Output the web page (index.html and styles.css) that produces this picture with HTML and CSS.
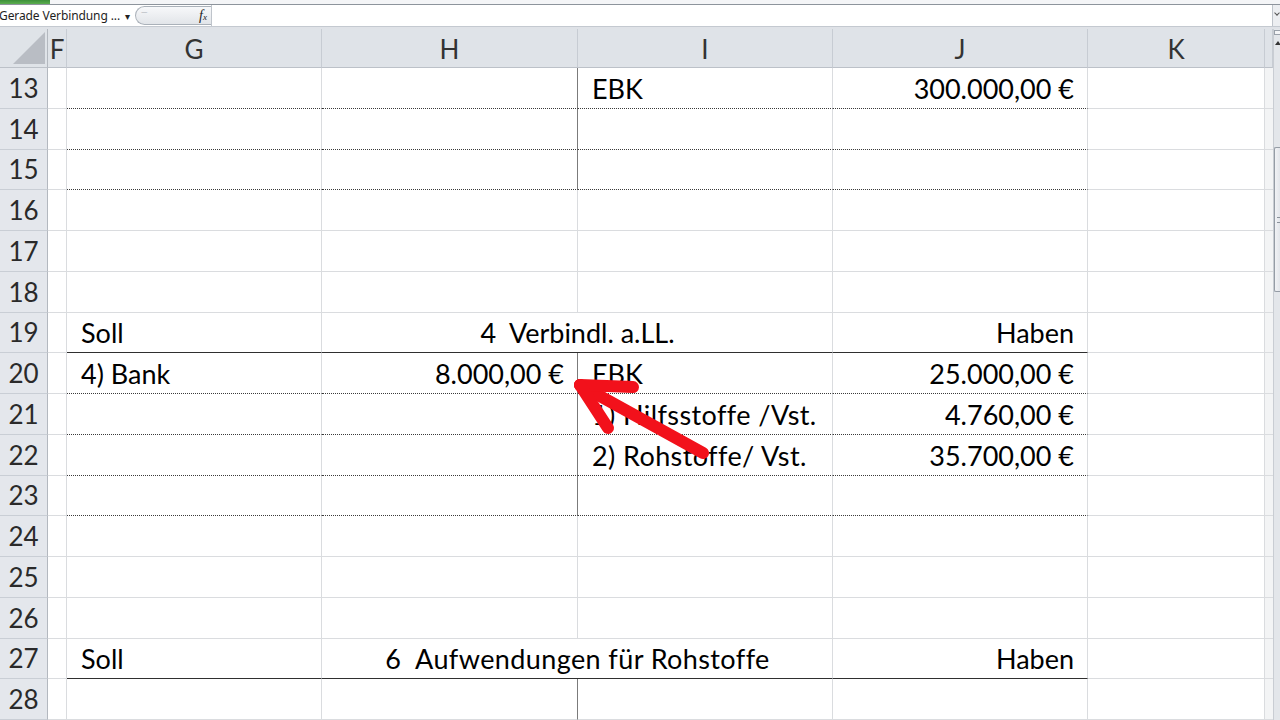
FILE: index.html
```html
<!DOCTYPE html>
<html>
	<head>
		<title>Mappe1 - Excel</title>
		<link rel="stylesheet" href="styles.css">
	</head>
	<body>
		<div class="page">
			<div class="topstrip"><div class="filetab"></div></div>
			<div class="fbar">
				<div class="namebox">Gerade Verbindung ...<span class="drop">&#9662;</span></div>
				<div class="fxbox"><span class="dim">&#8722;</span><span class="fx">f<sub>x</sub></span></div>
				<div class="finput"></div>
				<div class="fexpand"><span class="chev"></span></div>
			</div>
			<div class="band"></div>
			<div class="main">
				<div class="sheet">
					<!-- header -->
					<div class="hd corner"><svg width="34" height="34" viewBox="0 0 34 34"><polygon points="32,1 32,33 0,33" fill="#b9bdc4"/></svg></div>
					<div class="hd">F</div>
					<div class="hd">G</div>
					<div class="hd">H</div>
					<div class="hd">I</div>
					<div class="hd">J</div>
					<div class="hd">K</div>
					<div class="hd"></div>

					<div class="rh">13</div><div class="c f"></div><div class="c dot"></div><div class="c dot mid"></div><div class="c dot">EBK</div><div class="c dot r">300.000,00 €</div><div class="c"></div><div class="c end"></div>
					<div class="rh">14</div><div class="c f"></div><div class="c dot"></div><div class="c dot mid"></div><div class="c dot"></div><div class="c dot"></div><div class="c"></div><div class="c end"></div>
					<div class="rh">15</div><div class="c f"></div><div class="c dot"></div><div class="c dot mid"></div><div class="c dot"></div><div class="c dot"></div><div class="c"></div><div class="c end"></div>
					<div class="rh">16</div><div class="c f"></div><div class="c"></div><div class="c"></div><div class="c"></div><div class="c"></div><div class="c"></div><div class="c end"></div>
					<div class="rh">17</div><div class="c f"></div><div class="c"></div><div class="c"></div><div class="c"></div><div class="c"></div><div class="c"></div><div class="c end"></div>
					<div class="rh">18</div><div class="c f"></div><div class="c"></div><div class="c"></div><div class="c"></div><div class="c"></div><div class="c"></div><div class="c end"></div>
					<div class="rh">19</div><div class="c f"></div><div class="c line">Soll</div><div class="c line ctr span2">4&nbsp; Verbindl. a.LL.</div><div class="c line r">Haben</div><div class="c"></div><div class="c end"></div>
					<div class="rh">20</div><div class="c f"></div><div class="c dot">4) Bank</div><div class="c dot mid r">8.000,00 €</div><div class="c dot">EBK</div><div class="c dot r">25.000,00 €</div><div class="c"></div><div class="c end"></div>
					<div class="rh">21</div><div class="c f"></div><div class="c dot"></div><div class="c dot mid"></div><div class="c dot wide">1) Hilfsstoffe /Vst.</div><div class="c dot r">4.760,00 €</div><div class="c"></div><div class="c end"></div>
					<div class="rh">22</div><div class="c f"></div><div class="c dot"></div><div class="c dot mid"></div><div class="c dot wide">2) Rohstoffe/ Vst.</div><div class="c dot r">35.700,00 €</div><div class="c"></div><div class="c end"></div>
					<div class="rh">23</div><div class="c f"></div><div class="c dot"></div><div class="c dot mid"></div><div class="c dot"></div><div class="c dot"></div><div class="c"></div><div class="c end"></div>
					<div class="rh">24</div><div class="c f"></div><div class="c"></div><div class="c"></div><div class="c"></div><div class="c"></div><div class="c"></div><div class="c end"></div>
					<div class="rh">25</div><div class="c f"></div><div class="c"></div><div class="c"></div><div class="c"></div><div class="c"></div><div class="c"></div><div class="c end"></div>
					<div class="rh">26</div><div class="c f"></div><div class="c"></div><div class="c"></div><div class="c"></div><div class="c"></div><div class="c"></div><div class="c end"></div>
					<div class="rh">27</div><div class="c f"></div><div class="c line">Soll</div><div class="c line ctr span2 wide">6&nbsp; Aufwendungen für Rohstoffe</div><div class="c line r">Haben</div><div class="c"></div><div class="c end"></div>
					<div class="rh">28</div><div class="c f"></div><div class="c"></div><div class="c mid"></div><div class="c"></div><div class="c"></div><div class="c"></div><div class="c end"></div>
				</div>
				<div class="vscroll">
					<div class="split"></div>
					<div class="up"></div>
					<div class="thumb"><div class="grip"></div></div>
				</div>
			</div>
			<!-- red arrow drawn over the sheet -->
			<svg class="arrow" width="1280" height="720" viewBox="0 0 1280 720">
				<g stroke="#f2111b" stroke-width="12" stroke-linecap="round" stroke-linejoin="round" fill="none">
					<line x1="703" y1="453" x2="580" y2="385"/>
					<line x1="580" y1="385" x2="633" y2="387"/>
					<line x1="580" y1="385" x2="608" y2="428"/>
				</g>
			</svg>
		</div>
	</body>
</html>
```

FILE: styles.css
```css
body {
	margin: 0;
	background: #fff;
	font-family: Lato, "Open Sans", sans-serif;
	overflow: hidden;
}
.page {
	position: relative;
	width: 1280px;
	height: 720px;
	overflow: hidden;
}
.topstrip {
	height: 4px;
	background: #f4f5f7;
}
.filetab {
	width: 50px;
	height: 4px;
	background: linear-gradient(#3d8f3a, #5cae4f);
}
.fbar {
	display: flex;
	align-items: center;
	height: 21px;
	border-top: 1px solid #8d949c;
	border-bottom: 1px solid #c4c9d0;
	background: #fff;
	font-family: "Noto Sans", "DejaVu Sans", sans-serif;
	font-size: 12px;
}
.namebox {
	width: 133px;
	height: 100%;
	display: flex;
	align-items: center;
	margin-left: -1px;
	color: #1e1e1e;
	white-space: nowrap;
	letter-spacing: -0.1px;
}
.drop {
	font-size: 10px;
	margin-left: 5px;
	color: #222;
}
.fxbox {
	width: 76px;
	height: 19px;
	margin-left: 3px;
	box-sizing: border-box;
	border: 1px solid #aab1b9;
	border-right: none;
	border-radius: 10px 0 0 10px;
	background: linear-gradient(#f7f8fa, #e2e5e9);
	display: flex;
	align-items: center;
	justify-content: space-between;
	padding: 0 4px 0 5px;
}
.dim {
	color: #c4c8cd;
	font-size: 12px;
	line-height: 1;
	margin-top: -6px;
}
.fx {
	font-family: "Liberation Serif", serif;
	font-style: italic;
	font-size: 14px;
	color: #222;
	line-height: 1;
}
.fx sub {
	font-size: 9px;
	vertical-align: 0;
}
.finput {
	flex: 1;
	height: 100%;
	border-left: 1px solid #bfc4cb;
}
.fexpand {
	width: 8px;
	height: 100%;
	border-left: 1px solid #bfc4cb;
	background: #eceef1;
	box-sizing: border-box;
	display: flex;
	justify-content: center;
	padding-top: 6px;
}
.chev {
	width: 3px;
	height: 3px;
	border-right: 1px solid #555;
	border-bottom: 1px solid #555;
	transform: rotate(45deg);
}
.band {
	height: 2px;
	background: #dfe2e7;
}
.main {
	display: flex;
}
.sheet {
	width: 1273px;
	display: grid;
	grid-template-columns: 48px 19px 255px 256px 255px 255px 177px 8px;
	grid-template-rows: 39px repeat(16, 40.75px);
}
.hd {
	background: #dfe3e8;
	border-right: 1px solid #c7ccd3;
	border-bottom: 1px solid #bcc1c8;
	box-sizing: border-box;
	display: flex;
	align-items: center;
	justify-content: center;
	font-size: 26px;
	color: #333;
	padding-top: 2px;
	min-width: 0;
}
.corner {
	border-right: 1px solid #b3b8bf;
	align-items: flex-end;
	justify-content: flex-end;
	padding: 0 0 2px 0;
}
.rh {
	background: #e4e7ec;
	border-right: 1px solid #b3b8bf;
	border-bottom: 1px solid #c9ced5;
	box-sizing: border-box;
	display: flex;
	align-items: flex-end;
	justify-content: center;
	padding-bottom: 6px;
	font-size: 26px;
	line-height: 27px;
	color: #2a2a2a;
}
.c {
	border-right: 1px solid #dadcdf;
	border-bottom: 1px solid #dadcdf;
	box-sizing: border-box;
	display: flex;
	align-items: flex-end;
	padding: 0 13px 6px 14px;
	font-size: 27px;
	line-height: 27px;
	color: #000;
	white-space: nowrap;
	min-width: 0;
}
.f {
	padding: 0;
}
.wide {
	letter-spacing: 0.4px;
}
.r {
	justify-content: flex-end;
}
.ctr {
	justify-content: center;
}
.span2 {
	grid-column: span 2;
}
.dot {
	border-bottom: 1px dotted #3a3a3a;
}
.line {
	border-bottom: 1px solid #2f2f2f;
}
.mid {
	border-right: 1px solid #7b7b7b;
}
.end {
	background: #f3f4f5;
	border-right: none;
	padding: 0;
}
.vscroll {
	width: 7px;
	background: #e3e6ea;
	border-left: 1px solid #c9cdd3;
	box-sizing: border-box;
	display: flex;
	flex-direction: column;
}
.split {
	height: 3px;
	margin-top: 1px;
	border: 1px solid #9aa1aa;
	border-right: none;
	background: #f4f5f7;
}
.up {
	width: 0;
	height: 0;
	margin: 6px 0 0 1px;
	border-left: 3px solid transparent;
	border-right: 3px solid transparent;
	border-bottom: 4px solid #333;
}
.thumb {
	margin-top: 102px;
	height: 143px;
	border: 1px solid #959ca5;
	border-right: none;
	border-radius: 2px 0 0 2px;
	background: linear-gradient(90deg, #f1f2f5, #e2e5ea);
	display: flex;
	align-items: center;
}
.grip {
	width: 4px;
	height: 4px;
	margin-left: 2px;
	border-top: 1px solid #8b929b;
	border-bottom: 1px solid #8b929b;
}
.arrow {
	position: absolute;
	left: 0;
	top: 0;
	pointer-events: none;
}
```
